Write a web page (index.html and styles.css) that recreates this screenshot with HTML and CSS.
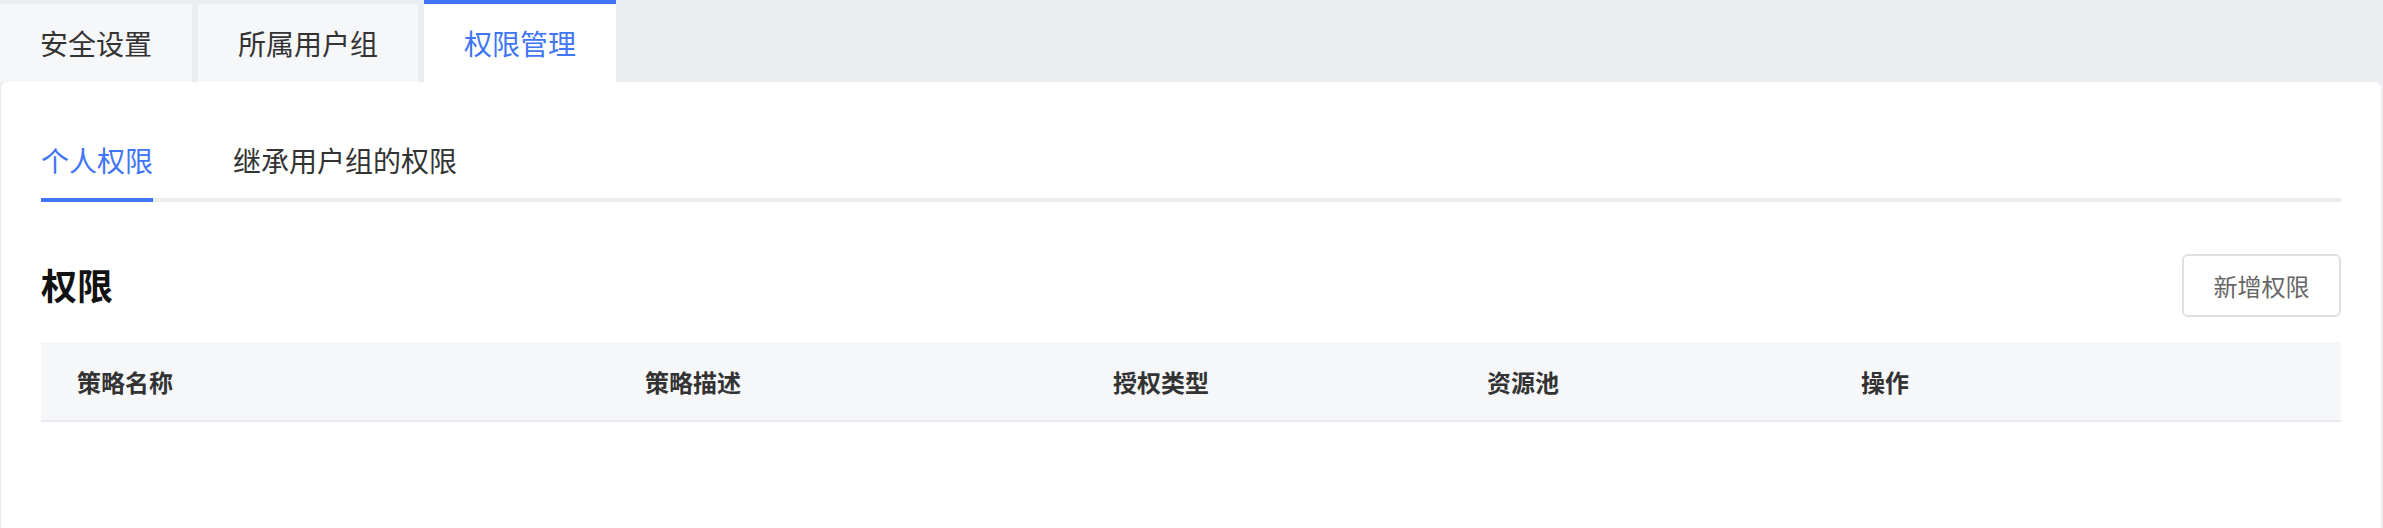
FILE: index.html
```html
<!DOCTYPE html>
<html lang="zh-CN">
<head>
<meta charset="utf-8">
<title>权限管理</title>
<link rel="stylesheet" href="styles.css">
</head>
<body>

<div class="tabs">
    <div class="tab">安全设置</div>
    <div class="tab">所属用户组</div>
    <div class="tab active">权限管理</div>
</div>

<div class="card">
    <div class="subnav">
        <div class="subtab active">个人权限</div>
        <div class="subtab">继承用户组的权限</div>
    </div>

    <div class="titlebar">
        <h2 class="title">权限</h2>
        <button class="btn" type="button">新增权限</button>
    </div>

    <div class="grid">
        <div class="grid-head">
            <div class="cell">策略名称</div>
            <div class="cell">策略描述</div>
            <div class="cell">授权类型</div>
            <div class="cell">资源池</div>
            <div class="cell">操作</div>
        </div>
    </div>
</div>

</body>
</html>
```

FILE: styles.css
```css
body {
    margin: 0;
    background-color: #ecedf1;
    font-family: "Noto Sans CJK SC", "Noto Sans", sans-serif;
    color: #333;
}

/* top tabs */
.tabs {
    display: flex;
    align-items: flex-end;
    gap: 6px;
    height: 82px;
}
.tab {
    height: 78px;
    line-height: 78px;
    padding: 0 40px;
    background-color: #f6f7f9;
    font-size: 28px;
    color: #333;
}
.tab.active {
    height: 78px;
    border-top: 4px solid #4075f5;
    background-color: #fff;
    color: #4075f5;
}

/* card */
.card {
    margin: 0 2px 0 1px;
    height: 446px;
    padding: 58px 40px 0 40px;
    background-color: #fff;
    border-radius: 6px 6px 0 0;
    box-sizing: border-box;
}

.subnav {
    display: flex;
    gap: 80px;
    border-bottom: 4px solid #ececec;
}
.subtab {
    font-size: 28px;
    line-height: 40px;
    padding-bottom: 18px;
    margin-bottom: -4px;
    border-bottom: 4px solid transparent;
    color: #333;
}
.subtab.active {
    color: #4075f5;
    border-bottom-color: #4075f5;
}

.titlebar {
    display: flex;
    justify-content: space-between;
    align-items: center;
    margin-top: 52px;
    height: 63px;
}
.title {
    margin: 0 0 4px 0;
    font-size: 36px;
    line-height: 48px;
    font-weight: bold;
    color: #111;
}
.btn {
    height: 63px;
    width: 159px;
    padding: 0;
    border: 2px solid #dfe1e6;
    border-radius: 6px;
    background-color: #fff;
    font-family: inherit;
    font-size: 24px;
    color: #666;
}

.grid {
    margin-top: 25px;
}
.grid-head {
    display: grid;
    grid-template-columns: 568px 468px 374px 374px 1fr;
    height: 78px;
    align-items: center;
    background-color: #f6f7f9;
    border-bottom: 2px solid #e9eaf0;
}
.cell {
    padding-left: 36px;
    font-size: 24px;
    font-weight: bold;
    color: #333;
}
```
